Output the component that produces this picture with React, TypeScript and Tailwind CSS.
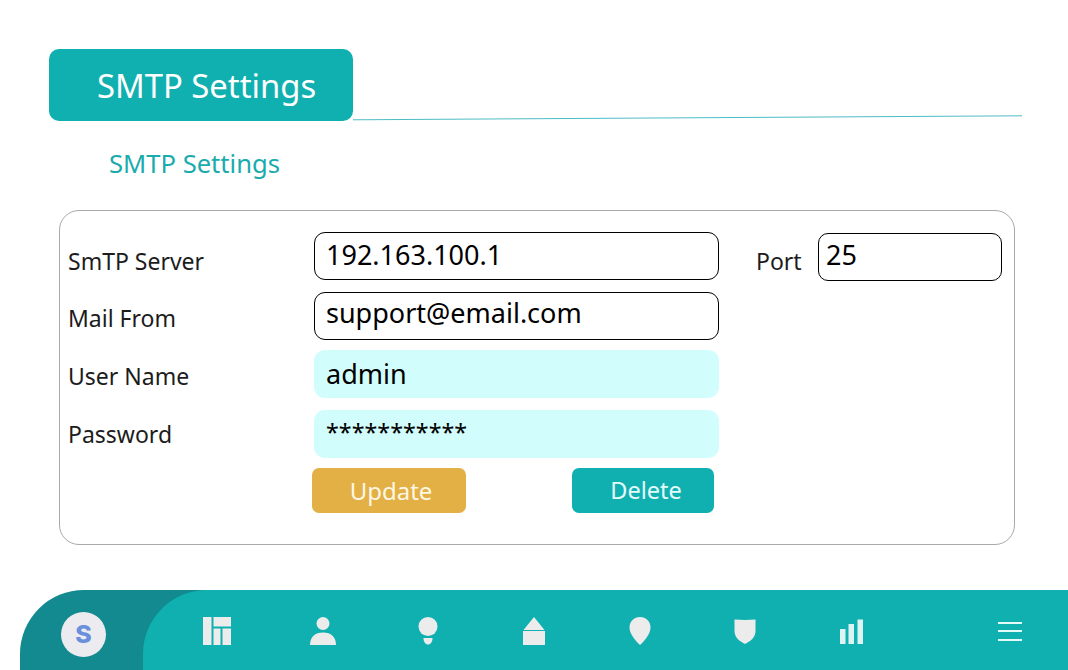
import { ReactNode } from 'react';

const font = { fontFamily: '"Noto Sans", "Open Sans", sans-serif' };

function Label({ children, className }: { children: ReactNode; className: string }) {
  return <div className={`w-[246px] shrink-0 text-[23px] leading-none text-[#1c1c1c] ${className}`}>{children}</div>;
}

const boxed = 'h-12 shrink-0 flex items-center leading-none text-black';

const navIcons = [
  <svg key="board" width="30" height="30" viewBox="0 0 30 30" fill="#ececec">
    <path d="M1 1h8.500v28H1zM11.500 1H29v9.500H11.500zM11.500 12.500h7v16.500h-7zM20.500 12.500H29v16.500h-8.500z" />
  </svg>,
  <svg key="user" width="30" height="30" viewBox="0 0 30 30" fill="#ececec">
    <circle cx="15" cy="7.500" r="6.500" />
    <path d="M2 29c0-8 5-12.500 13-12.500S28 21 28 29z" />
  </svg>,
  <svg key="bulb" width="30" height="30" viewBox="0 0 30 30" fill="#ececec">
    <circle cx="15" cy="10.500" r="9.500" />
    <path d="M10.500 22h9c0 4-2 6.500-4.500 6.500S10.500 26 10.500 22z" />
  </svg>,
  <svg key="home" width="30" height="30" viewBox="0 0 30 30" fill="#ececec">
    <path d="M15 1l10.500 13h-21zM4 15h22v14H4z" />
  </svg>,
  <svg key="pin" width="30" height="30" viewBox="0 0 30 30" fill="#ececec">
    <path d="M15 1c6 0 10.500 4.500 10.500 10.500 0 6-5.500 13-10.500 17.500C10 24.500 4.500 17.500 4.500 11.500 4.500 5.500 9 1 15 1z" />
  </svg>,
  <svg key="shield" width="30" height="30" viewBox="0 0 30 30" fill="#ececec">
    <path d="M4.500 3.500c7 .6 14 .6 21 0V15c0 6-4.500 10-10.500 13C9 25 4.500 21 4.500 15z" />
  </svg>,
  <svg key="bars" width="30" height="30" viewBox="0 0 30 30" fill="#def3f3">
    <path d="M4 13h5.500v15H4zM12.500 8H18v20h-5.500zM21.500 3.500H27V28h-5.500z" />
  </svg>,
];

export default function App() {
  return (
    <div className="h-[670px] w-[1068px] overflow-hidden bg-white flex flex-col relative" style={font}>
      {/* Header */}
      <div className="pt-[49px] pl-[49px]">
        <div className="w-[304px] h-[72px] rounded-[10px] bg-[#11b0b0] text-white text-[32.800px] leading-none flex items-center pl-12 pt-[3px]">
          SMTP Settings
        </div>
      </div>
      <svg className="absolute left-0 top-[110px]" width="1068" height="14" viewBox="0 0 1068 14">
        <line x1="353" y1="9.800" x2="1022" y2="5.800" stroke="#4cbcc4" strokeWidth="1" />
      </svg>
      <div className="pl-[109px] mt-[26px] text-[25.600px] leading-[34px] text-[#1aabad]">SMTP Settings</div>

      {/* Form card */}
      <div className="ml-[59px] mt-[29px] w-[956px] h-[335px] rounded-[20px] border border-[#a9a9a9] pl-2 pt-[21px]">
        <div className="flex">
          <Label className="pt-[18px]">SmTP Server</Label>
          <div className={`${boxed} w-[405px] rounded-[11px] border border-black pl-[11px] pb-1 text-[27px]`}>192.163.100.1</div>
          <div className="w-[62px] shrink-0 ml-[37px] pt-[18px] text-[23px] leading-none text-[#1c1c1c]">Port</div>
          <div className={`${boxed} w-[184px] mt-px rounded-[10px] border border-black pl-[7px] pb-1.5 text-[27px]`}>25</div>
        </div>
        <div className="flex mt-[11px]">
          <Label className="pt-[15px]">Mail From</Label>
          <div className={`${boxed} w-[405px] rounded-[11px] border border-black pl-[11px] pb-2 text-[27px]`}>support@email.com</div>
        </div>
        <div className="flex mt-[10px]">
          <Label className="pt-[15px]">User Name</Label>
          <div className={`${boxed} w-[405px] rounded-[11px] bg-[#d2fdfd] pl-3 pb-0.5 text-[27px]`}>admin</div>
        </div>
        <div className="flex mt-3">
          <Label className="pt-[13px]">Password</Label>
          <div className={`${boxed} w-[405px] rounded-[11px] bg-[#d2fdfd] pl-3 pb-0.5 text-[23.300px]`}>***********</div>
        </div>
        <div className="flex mt-[10px] ml-[244px]">
          <button className="w-[154px] h-[45px] rounded-[7px] bg-[#e2b044] text-[#fdf7e4] text-[24px] leading-none pl-1">
            Update
          </button>
          <button className="w-[142px] h-[45px] ml-[106px] rounded-[7px] bg-[#11b0b0] text-[#e4fbfb] text-[23.500px] leading-none pl-1.5">
            Delete
          </button>
        </div>
      </div>

      {/* Bottom nav */}
      <div className="mt-[45px] ml-[20px] h-20 flex bg-[#128a8f] rounded-tl-[64px]">
        <div className="w-[123px] flex items-center justify-center pl-[4px] pt-[9px]">
          <div
            className="w-[45px] h-[45px] rounded-full bg-[#ececf0] flex items-center justify-center text-[#6a8fdc] text-[25px] font-extrabold leading-none"
            style={{ fontFamily: 'Inter, sans-serif' }}
          >
            S
          </div>
        </div>
        <div className="flex-1 bg-[#11b0b0] rounded-tl-[64px] flex items-center pl-[21.500px] pt-[2px]">
          {navIcons.map((icon) => (
            <div key={icon.key} className="w-[105.600px] flex justify-center">
              {icon}
            </div>
          ))}
          <div className="ml-[94px] w-6 flex flex-col gap-[6.500px]">
            <div className="h-0.5 bg-[#e4fbfb]" />
            <div className="h-0.5 bg-[#e4fbfb]" />
            <div className="h-0.5 bg-[#e4fbfb]" />
          </div>
        </div>
      </div>
    </div>
  );
}
